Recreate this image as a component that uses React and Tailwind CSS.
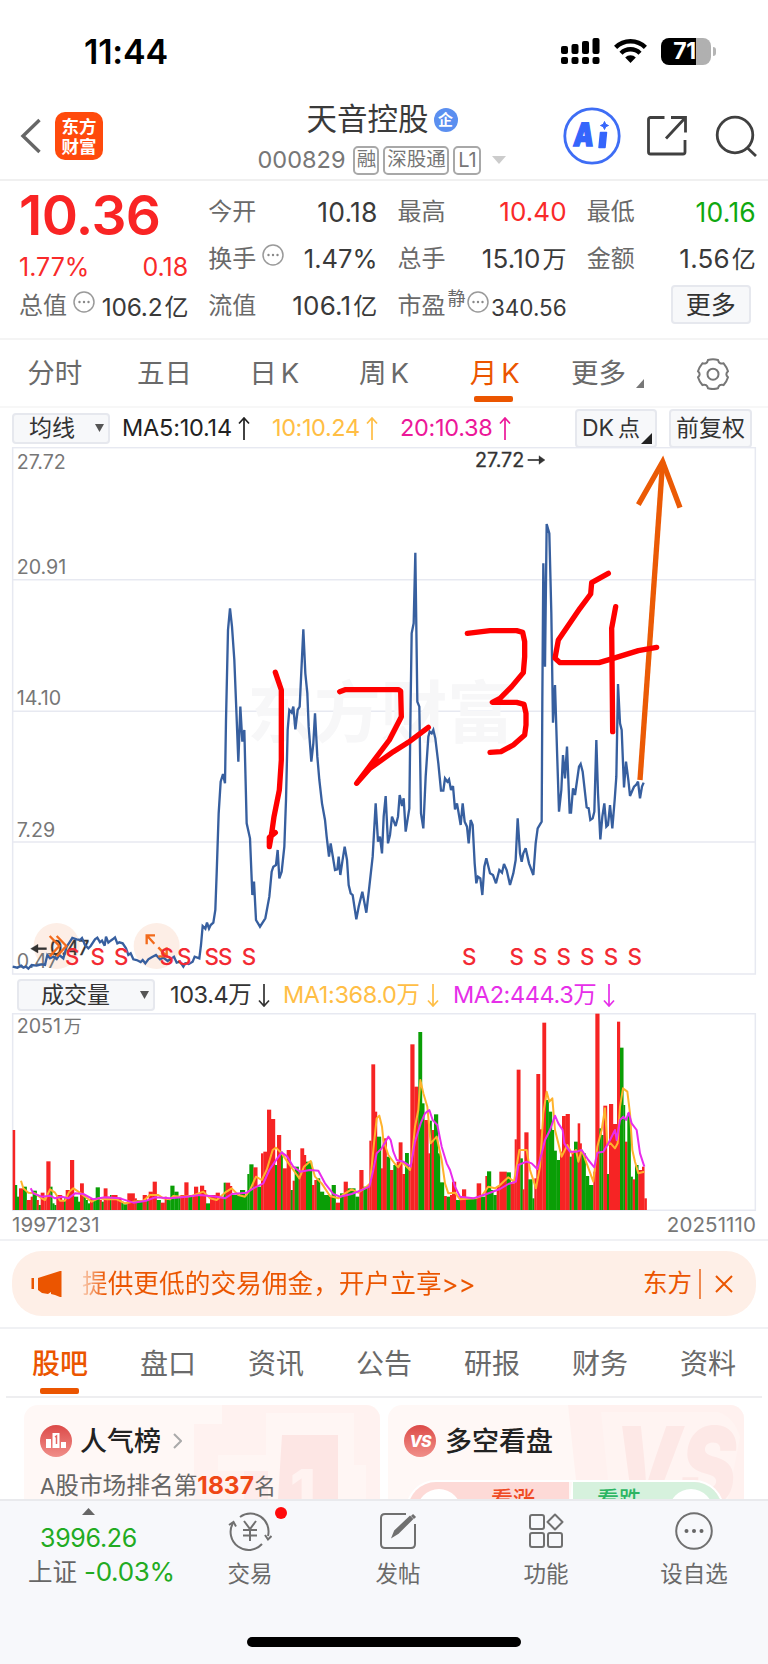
import { useState } from "react";

const PRICE =
  "38,800 52,803 64,797 70,803 78,800 85,806 95,795 110,797 125,793 135,795 142,765 150,775 160,770 170,777 178,765 190,775 200,740 210,725 217,714 230,718 240,720 246,714 255,735 265,745 272,738 285,718 292,713 300,727 306,722 314,737 318,710 325,728 332,722 338,718 345,712 352,730 358,727 368,730 378,745 385,765 392,760 400,778 410,780 422,786 428,780 436,790 445,778 455,772 468,765 480,778 490,773 503,783 515,775 522,770 530,788 540,785 550,800 556,790 566,792 578,785 584,770 598,775 603,735 608,678 616,686 621,668 627,686 632,675 640,668 646,630 650,520 656,340 662,245 669,222 675,250 678,60 684,-210 690,-275 696,-220 703,-120 709,30 715,185 721,20 727,125 733,90 740,370 750,415 757,585 762,545 768,660 780,680 796,655 808,590 815,515 820,500 828,495 833,450 838,535 845,515 853,440 858,300 863,90 868,30 875,38 880,20 886,88 893,30 899,20 910,-212 916,-80 922,-20 926,80 934,185 940,130 945,40 952,170 958,240 966,310 975,360 980,410 987,470 992,430 1005,510 1012,508 1016,470 1021,525 1027,485 1034,440 1041,480 1046,555 1052,580 1058,585 1069,658 1076,620 1087,575 1099,638 1108,560 1118,470 1127,310 1134,425 1140,410 1146,460 1151,350 1157,288 1164,430 1170,405 1176,350 1187,378 1194,350 1199,285 1206,318 1211,295 1217,395 1228,325 1232,0 1235,-200 1241,-230 1246,-442 1252,5 1258,20 1263,340 1270,385 1277,230 1285,110 1289,95 1295,100 1300,90 1306,115 1315,190 1323,272 1330,272 1335,235 1342,245 1347,238 1353,270 1359,258 1365,328 1371,310 1382,375 1388,310 1394,365 1401,380 1406,430 1412,360 1418,375 1424,490 1429,550 1434,530 1441,535 1447,585 1453,500 1459,475 1470,520 1479,525 1488,550 1498,510 1506,518 1512,492 1520,510 1530,555 1540,520 1547,480 1553,355 1560,460 1565,485 1570,460 1577,445 1587,490 1600,525 1607,430 1613,385 1625,365 1627,0 1630,-410 1635,-100 1640,-528 1648,-500 1654,-260 1659,68 1665,-45 1671,150 1677,335 1684,270 1689,165 1695,235 1701,140 1709,338 1713,338 1719,265 1725,285 1737,200 1742,192 1748,215 1760,322 1766,325 1771,360 1778,355 1783,335 1789,120 1794,280 1801,418 1807,350 1813,310 1819,380 1824,375 1830,315 1837,385 1844,300 1849,230 1854,-48 1860,70 1865,90 1872,262 1878,185 1885,240 1890,288 1902,260 1908,255 1914,245 1920,295 1926,260 1931,248";

const SIGNALS = [217, 293, 364, 500, 553, 635, 676, 747, 1408, 1550, 1621, 1691, 1762, 1833, 1904];

// x, top of the bar, colour; every run of bars reaches to the next x
const VOLUME =
  "38,480,r 45,645,g 51,680,g 57,655,r 69,650,g 80,690,r 92,680,r 98,662,g 110,690,r 116,705,g 122,668,r 133,685,r 139,574,r 151,650,g 157,700,g 163,705,g 169,675,r 186,690,r 192,685,g 197,660,r 210,570,r 222,680,g 234,695,g 240,640,r 251,675,g 257,690,g 263,700,g 270,685,r 280,690,g 287,652,g 299,690,r 305,695,g 311,655,r 322,680,r 330,675,g 334,675,r 352,683,r 364,695,g 370,703,g 382,670,r 404,685,r 410,690,g 428,675,r 440,690,g 446,665,r 458,635,r 470,690,g 482,698,r 494,680,r 500,690,g 511,647,g 523,665,g 535,680,g 541,675,r 553,637,r 565,675,g 577,680,r 582,650,r 594,672,g 600,647,r 612,660,r 618,700,g 630,675,r 647,668,r 659,680,r 671,638,g 677,638,r 690,648,r 696,675,g 720,660,g 735,675,g 742,612,g 748,583,g 760,592,r 772,650,g 783,550,r 790,545,r 801,419,r 813,447,r 825,585,g 831,495,r 843,545,g 848,595,r 860,540,r 872,660,g 878,632,r 884,590,g 896,605,r 901,535,r 912,555,r 918,575,g 936,645,r 943,630,r 950,625,g 960,665,g 972,675,g 990,680,r 995,645,g 1007,698,r 1020,670,g 1031,635,r 1043,655,g 1066,680,g 1078,600,r 1090,650,g 1102,645,r 1108,512,r 1114,283,r 1125,425,r 1131,500,g 1143,595,r 1148,505,r 1160,560,g 1170,600,r 1180,585,g 1190,575,r 1196,517,r 1207,612,r 1215,549,g 1226,600,r 1231,223,r 1243,350,r 1255,186,g 1266,400,g 1273,450,r 1285,550,r 1290,452,g 1295,480,r 1302,433,g 1314,550,g 1320,637,g 1332,678,r 1340,680,g 1350,675,r 1356,635,r 1368,690,g 1380,680,r 1386,658,r 1398,685,g 1430,640,r 1443,680,g 1456,618,r 1461,604,g 1473,660,g 1480,675,g 1490,650,r 1498,605,r 1520,607,g 1532,640,r 1544,508,r 1550,299,r 1561,565,g 1568,658,r 1573,487,r 1585,628,g 1597,685,g 1603,625,r 1609,312,r 1620,478,r 1627,158,r 1638,390,g 1646,425,g 1656,480,g 1662,542,g 1670,570,g 1680,545,r 1686,438,r 1697,432,r 1709,560,g 1715,545,r 1722,515,g 1733,460,r 1740,520,r 1745,550,g 1757,618,g 1767,645,g 1780,605,r 1786,131,r 1798,475,g 1804,495,g 1810,407,r 1821,612,g 1827,402,r 1839,462,r 1851,155,r 1860,233,g 1870,405,g 1875,515,r 1882,430,g 1892,620,g 1898,628,r 1905,585,g 1915,600,r 1926,590,r 1933,685,r 1940,720,r"
    .split(" ")
    .map((item) => item.split(","));

const VOL_MA1 =
  "63,632 70,655 85,668 105,670 125,685 135,690 150,658 165,668 180,692 195,692 208,665 220,655 235,665 255,680 275,695 295,685 320,688 350,688 375,700 400,695 430,692 450,675 475,675 490,685 510,688 520,678 545,680 575,678 610,665 630,685 650,690 675,668 695,655 715,675 735,680 750,660 768,620 785,630 800,600 818,540 828,533 845,550 860,572 880,600 898,625 912,590 932,573 945,620 965,640 990,678 1015,685 1035,670 1055,658 1075,668 1100,650 1110,640 1122,520 1130,445 1138,437 1146,470 1150,510 1165,555 1185,582 1195,592 1205,575 1230,600 1235,570 1245,470 1255,420 1261,330 1270,370 1282,410 1292,520 1310,500 1325,570 1335,640 1345,670 1365,668 1380,688 1425,685 1445,678 1465,650 1485,655 1500,645 1525,622 1542,635 1548,600 1558,540 1580,540 1590,600 1608,655 1620,590 1630,430 1640,365 1648,395 1657,385 1665,480 1685,560 1702,525 1715,550 1728,540 1735,575 1745,540 1760,580 1780,635 1792,530 1805,480 1815,415 1822,525 1832,520 1845,535 1853,520 1860,410 1869,355 1882,365 1890,430 1897,540 1905,575 1915,610 1933,605";

const VOL_MA2 =
  "92,655 100,670 125,680 150,677 165,685 185,680 205,685 225,670 250,672 280,688 315,682 360,685 400,698 440,692 465,682 510,685 560,680 600,675 650,680 675,685 695,672 740,668 760,655 790,640 808,600 825,575 845,547 862,560 880,590 900,605 930,600 955,602 975,640 1000,672 1020,680 1055,672 1090,658 1108,650 1120,600 1130,550 1145,535 1165,500 1172,510 1180,545 1190,570 1210,575 1232,590 1245,515 1262,460 1275,430 1288,420 1298,450 1312,465 1325,530 1340,580 1350,600 1365,650 1380,680 1420,685 1460,672 1500,657 1525,642 1548,635 1555,585 1580,575 1595,580 1612,597 1625,550 1635,510 1650,480 1665,437 1675,460 1688,480 1693,520 1710,545 1730,545 1745,540 1765,570 1783,592 1792,548 1810,545 1825,520 1845,480 1850,510 1860,450 1870,440 1878,450 1886,428 1895,460 1910,480 1920,550 1933,590";

const INFO_TABS = ["股吧", "盘口", "资讯", "公告", "研报", "财务", "资料"];

function Dots() {
  return (
    <svg width="22" height="22" viewBox="0 0 22 22" className="shrink-0" fill="none" stroke="#9a9a9a" strokeWidth="1.5">
      <circle cx="11" cy="11" r="10" />
      <g fill="#888" stroke="none">
        <circle cx="6.5" cy="11" r="1.2" />
        <circle cx="11" cy="11" r="1.2" />
        <circle cx="15.5" cy="11" r="1.2" />
      </g>
    </svg>
  );
}

function Arrow({ down = false, className = "" }) {
  return (
    <svg width="12" height="23" viewBox="0 0 12 23" className={className} fill="none" stroke="currentColor" strokeWidth="1.7">
      <path d={down ? "M6 0V22M1 16.5L6 22L11 16.5" : "M6 23V1M1 6.5L6 1L11 6.5"} />
    </svg>
  );
}

function Quote({ label, value, unit, color = "text-[#3a3a3a]", children, size = "text-[25.5px]" }) {
  return (
    <div className="flex h-[47px] items-center justify-between pt-[1px]">
      <span className="flex items-center text-[24px] text-[#6a6a6a]">
        {label}
        {children}
      </span>
      <span className={`${size} ${color}`}>
        {value}
        {unit && <span className="ml-[2px] text-[24px]">{unit}</span>}
      </span>
    </div>
  );
}

function StatusBar() {
  return (
    <div className="flex h-[96px] items-center pl-[84px] pr-[52px] pt-[6px]">
      <span className="pt-[1px] text-[34px] font-semibold tracking-[-0.2px] text-black">11:44</span>
      <svg width="40" height="28" viewBox="0 0 40 28" className="ml-auto">
        <rect x="1" y="9" width="7" height="8" rx="2" />
        <rect x="11.5" y="7" width="7" height="10" rx="2" />
        <rect x="22" y="4" width="7" height="13" rx="2" />
        <rect x="32.5" y="1" width="7" height="16" rx="2" />
        <rect x="1" y="20" width="7" height="7" rx="2" />
        <rect x="11.5" y="20" width="7" height="7" rx="2" />
        <rect x="22" y="20" width="7" height="7" rx="2" />
        <rect x="32.5" y="20" width="7" height="7" rx="2" />
      </svg>
      <svg width="33" height="26" viewBox="0 0 33 26" className="ml-[14px]" fill="none" stroke="#000" strokeWidth="4.4">
        <path d="M1.6 9.4a21 21 0 0 1 29.8 0" />
        <path d="M7 15.2a13.4 13.4 0 0 1 19 0" />
        <path d="M11.2 19.4a7.5 7.5 0 0 1 10.6 0L16.5 25Z" fill="#000" stroke="none" />
      </svg>
      <div className="ml-[14px] flex h-[27px] w-[50px] items-center justify-center overflow-hidden rounded-[8px] bg-linear-to-r from-black from-70% to-[#b0b0b0] to-70% pr-[3px] text-[23px] font-bold tracking-[-0.5px] text-white">
        71
      </div>
      <div className="ml-[2px] h-[9px] w-[3px] rounded-r-full bg-[#b5b5b5]" />
    </div>
  );
}

function Header() {
  return (
    <div className="flex h-[85px] items-center border-b-2 border-[#f0f0f0] pl-[20px] pr-[11px]">
      <div className="flex w-[219px] items-center pb-[4px]">
        <svg width="21" height="36" viewBox="0 0 21 36" fill="none" stroke="#666" strokeWidth="3.4">
          <path d="M19.5 2L3 18L19.5 34" />
        </svg>
        <div className="ml-[14px] flex h-[48px] w-[48px] flex-col items-center justify-center rounded-[10px] bg-[#ff4a0c] font-['Noto_Sans_CJK_SC',sans-serif] text-[17.5px] font-bold leading-[20px] text-white">
          <span>东方</span>
          <span>财富</span>
        </div>
      </div>
      <div className="flex w-[286px] flex-col items-center pt-[3px]">
        <div className="flex h-[42px] items-center gap-[5px]">
          <span className="text-[30.5px] text-[#3a3a3a]">天音控股</span>
          <span className="flex h-[24px] w-[24px] items-center justify-center rounded-full bg-[#5b8ff0] text-[15px] font-bold text-white">企</span>
        </div>
        <div className="flex h-[39px] items-center text-[23.5px] text-[#777]">
          <span className="mr-[8px]">000829</span>
          <span className="mr-[4px] flex h-[29px] w-[26px] items-center justify-center rounded-[5px] border-2 border-[#a8a8a8] text-[19.5px]">融</span>
          <span className="mr-[4px] flex h-[29px] w-[66px] items-center justify-center rounded-[5px] border-2 border-[#a8a8a8] text-[19.5px]">深股通</span>
          <span className="flex h-[29px] w-[28px] items-center justify-center rounded-[5px] border-2 border-[#a8a8a8] text-[20px]">L1</span>
          <svg width="14" height="8" viewBox="0 0 14 8" className="ml-[11px]">
            <path d="M0 0H14L7 8Z" fill="#ccc" />
          </svg>
        </div>
      </div>
      <div className="ml-auto flex items-center pb-[4px]">
        <svg width="58" height="58" viewBox="0 0 58 58" fill="none">
          <circle cx="29" cy="29" r="27.2" stroke="#3e6df5" strokeWidth="2.8" />
          <text x="14" y="39.500" fontSize="32" fontWeight="900" textLength="20" lengthAdjust="spacingAndGlyphs" transform="skewX(-6)" fill="#3565fb" stroke="#3565fb" strokeWidth="1.500">A</text>
          <path d="M37.500 25.500h6l-1.500 15h-6z" fill="#3565fb" stroke="#3565fb" strokeWidth="1.500" strokeLinejoin="round" />
          <path d="M41.500 14.500l1.200 2.800 2.800 1.200-2.800 1.200-1.200 2.800-1.200-2.800-2.800-1.200 2.800-1.200z" fill="#3565fb" stroke="#3565fb" />
        </svg>
        <svg width="42" height="42" viewBox="0 0 42 42" className="ml-[25px]" fill="none" stroke="#404040" strokeWidth="2.8">
          <path d="M18.500 2.500H4.500a2 2 0 0 0-2 2V37a2 2 0 0 0 2 2H37a2 2 0 0 0 2-2V25" />
          <path d="M25 2.500H39.500V17.500M39.500 2.500L20 23.500" />
        </svg>
        <svg width="42" height="42" viewBox="0 0 42 42" className="ml-[27px]" fill="none" stroke="#404040" strokeWidth="2.8">
          <circle cx="20" cy="20" r="17.800" />
          <path d="M32.500 33L41 41" />
        </svg>
      </div>
    </div>
  );
}

function QuotePanel() {
  return (
    <div className="grid h-[159px] grid-cols-4 gap-x-[20px] border-b-2 border-[#f4f4f4] pl-[19px] pr-[12px] pt-[7px]">
      <div>
        <div className="flex h-[54px] items-center text-[55px] font-semibold tracking-[-0.6px] text-[#f92424]">10.36</div>
        <div className="flex h-[50px] items-center justify-between text-[25px] text-[#f92a2a]">
          <span>1.77%</span>
          <span>0.18</span>
        </div>
        <div className="-mt-[10px]">
          <Quote label="总值" value="106.2" unit="亿" size="text-[24.5px] tracking-[-0.2px] pt-[2px]">
            <span className="ml-[6px] pb-[9px]"><Dots /></span>
          </Quote>
        </div>
      </div>
      <div>
        <Quote label="今开" value="10.18" size="text-[26.5px] tracking-[0.2px]" />
        <Quote label="换手" value="1.47%">
          <span className="ml-[6px] pb-[9px]"><Dots /></span>
        </Quote>
        <Quote label="流值" value="106.1" unit="亿" size="text-[26px] tracking-[0.2px]" />
      </div>
      <div>
        <Quote label="最高" value="10.40" color="text-[#f92a2a]" size="text-[26px] tracking-[0.1px]" />
        <Quote label="总手" value="15.10" unit="万" size="text-[26px] tracking-[0.2px]" />
        <Quote label="市盈" value="340.56" size="text-[22.5px] pt-[5px]">
          <span className="-mt-[14px] ml-[2px] text-[18px]">静</span>
          <span className="ml-[1px] pb-[9px]"><Dots /></span>
        </Quote>
      </div>
      <div>
        <Quote label="最低" value="10.16" color="text-[#10a810]" size="text-[26.5px] tracking-[0.2px]" />
        <Quote label="金额" value="1.56" unit="亿" size="text-[26px] tracking-[0.2px]" />
        <div className="ml-[84px] mt-[3px] flex h-[39px] w-[80px] items-center justify-center rounded-[4px] border-2 border-[#e6e8ee] bg-[#f7f8fa] pt-[1px] text-[25px] text-[#333]">更多</div>
      </div>
    </div>
  );
}

function PeriodTabs() {
  return (
    <div className="grid h-[68px] grid-cols-7 border-b-2 border-[#f7f7f7] pt-[1px] text-[27.500px] text-[#6a6a6a]">
      <div className="flex items-center justify-center">分时</div>
      <div className="flex items-center justify-center">五日</div>
      <div className="flex items-center justify-center gap-[4px]">日<span>K</span></div>
      <div className="flex items-center justify-center gap-[4px]">周<span>K</span></div>
      <div className="relative flex items-center justify-center gap-[4px] pl-[2px] text-[#eb5500]">
        月<span>K</span>
        <span className="absolute bottom-[4px] left-[35px] h-[6px] w-[39px] rounded-[2px] bg-[#eb5500]" />
      </div>
      <div className="flex items-center justify-center gap-[10px] pl-[8px]">
        更多
        <svg width="8" height="9" viewBox="0 0 8 9" className="mt-[20px]"><path d="M8 0V9H0Z" fill="#777" /></svg>
      </div>
      <div className="flex items-center justify-center">
        <svg width="34" height="32" viewBox="0 0 34 32" fill="none" stroke="#777" strokeWidth="2">
          <path d="M12 2q5-1.500 10 0c.6 3 2.700 4.200 5.600 3.300q3.100 3.700 4.400 8c-2.200 2-2.200 4 0 6q-1.300 4.300-4.400 7.700c-2.900-.9-5 .3-5.600 3.300q-5 1.500-10 0c-.6-3-2.700-4.200-5.600-3.300q-3.100-3.400-4.400-7.700c2.200-2 2.200-4 0-6q1.300-4.300 4.400-8c2.900.9 5-.3 5.600-3.300z" />
          <circle cx="17" cy="16.200" r="5.500" />
        </svg>
      </div>
    </div>
  );
}

function PriceChart() {
  return (
    <svg width="768" height="528" viewBox="0 -759 2304 1584" className="block">
      <g stroke="#e7e9f1" strokeWidth="4.500" fill="none">
        <rect x="38" y="-757" width="2228" height="1579" />
        <path d="M38 -361H2266M38 34H2266M38 426H2266" />
      </g>
      <text x="742" y="112" fontSize="200" fontWeight="700" fill="#f7f7f8">东方财富</text>
      <circle cx="170" cy="738" r="69" fill="#fdeee6" />
      <circle cx="470" cy="738" r="69" fill="#fdeee6" />
      <g fontSize="59" fill="#777">
        <text x="50" y="-692">27.72</text>
        <text x="50" y="-379">20.91</text>
        <text x="50" y="15">14.10</text>
        <text x="50" y="410">7.29</text>
        <text x="50" y="803">0.47</text>
      </g>
      <g fill="#333" stroke="#333" strokeWidth="1" fontSize="59">
        <text x="1425" y="-699">27.72</text>
        <path d="M1583 -720H1625" strokeWidth="5" />
        <path d="M1617 -733L1635 -720L1617 -707Z" />
        <text x="150" y="766" textLength="118">0.47</text>
        <path d="M105 746H140" strokeWidth="7" />
        <path d="M92 746L114 733V759Z" />
      </g>
      <polyline points={PRICE} fill="none" stroke="#375f9f" strokeWidth="7" strokeLinejoin="miter" strokeMiterlimit="3" />
      <g fill="none" stroke="#f26a1b" strokeWidth="7">
        <path d="M149 708L178 738L149 769M170 708L199 738L170 769" />
        <path d="M440 733V706H465M440 706L463 731" />
        <path d="M475 742L500 769M500 742V769H475" />
      </g>
      <g fontSize="67" fontWeight="500" fill="#f32a33" textAnchor="middle">
        {SIGNALS.map((x) => (
          <text key={x} x={x} y="796">S</text>
        ))}
      </g>
      <g fill="none" stroke="#eb5a05" strokeWidth="16">
        <path d="M1988 -715L1920 240" />
        <path d="M1915 -586L1988 -715L2040 -577" />
      </g>
      <g fill="none" stroke="#ff0000" strokeWidth="16" strokeLinecap="round" strokeLinejoin="round">
        <path d="M826 -83L844 -30V180L838 270L822 350L815 400L808 440V412L826 398" />
        <path d="M1019 -25L1035 -31H1195L1202 -27L1204 50L1168 120L1070 250L1110 205L1180 155L1225 127L1285 82" />
        <path d="M1402 -200L1470 -208H1550L1568 -203L1574 -175V-130L1570 -82L1535 -40L1500 -5L1477 7H1550L1572 13L1578 40V75L1574 105L1540 135L1503 155L1470 157" />
        <path d="M1825 -380L1775 -352L1772 -318L1740 -275L1675 -180L1665 -125L1680 -112H1797L1830 -122L1915 -148L1970 -158" />
        <path d="M1847 -280L1835 -215L1838 95" />
      </g>
    </svg>
  );
}

function VolumeChart() {
  return (
    <svg width="768" height="198" viewBox="0 129 2304 594" className="block">
      <path d="M38 131H2266V721H38Z" fill="none" stroke="#e7e9f1" strokeWidth="4.500" />
      <text x="50" y="189" fontSize="59" fill="#777">2051<tspan dx="8" fontSize="54">万</tspan></text>
      {VOLUME.slice(0, -1).map(([x, top, kind], i) => (
        <rect
          key={x}
          x={x}
          y={top}
          width={VOLUME[i + 1][0] - x + 0.6}
          height={720 - top}
          fill={kind === "r" ? "#f62424" : "#0a9e06"}
        />
      ))}
      <g fill="none" strokeWidth="6" strokeLinejoin="round">
        <polyline points={VOL_MA1} stroke="#ffb32c" />
        <polyline points={VOL_MA2} stroke="#e92cec" />
      </g>
    </svg>
  );
}

function Banner() {
  return (
    <div className="h-[90px] border-y-2 border-[#f0f1f4] px-[12px] pt-[10px]">
      <div className="flex h-[65px] items-center rounded-[30px] bg-[#feefe7] pl-[19px] pr-[23px] text-[25.700px] text-[#eb5500]">
        <svg width="32" height="28" viewBox="0 0 32 28" fill="#eb5500">
          <path d="M0.500 8h2.500v11H0.500zM7 8L29 1h1.500v26H29l-5-2-4-1v-2l-3 2-6-1-4-3z" />
        </svg>
        <span className="ml-[19px] bg-linear-to-r from-[#eb5500]/20 to-[#eb5500] to-6% bg-clip-text py-[4px] text-transparent">提供更低的交易佣金，开户立享&gt;&gt;</span>
        <span className="ml-auto text-[24.500px]">东方</span>
        <span className="ml-[7px] h-[30px] w-[2px] bg-[#f08a50]" />
        <svg width="18" height="18" viewBox="0 0 18 18" className="ml-[14px]" fill="none" stroke="#eb5500" strokeWidth="2">
          <path d="M1 1L17 17M17 1L1 17" />
        </svg>
      </div>
    </div>
  );
}

function InfoTabs() {
  const [active, setActive] = useState("股吧");
  return (
    <div className="mx-[6px] grid h-[69px] grid-cols-7 border-b-2 border-[#eeeef0]">
      {INFO_TABS.map((tab) => (
        <button
          key={tab}
          onClick={() => setActive(tab)}
          className={`relative flex items-center justify-center pt-[3px] text-[28px] ${tab === active ? "font-medium text-[#eb5500]" : "text-[#6a6a6a]"}`}
        >
          {tab}
          {tab === active && <span className="absolute bottom-[2px] left-[34px] h-[6px] w-[39px] rounded-[2px] bg-[#eb5500]" />}
        </button>
      ))}
    </div>
  );
}

function Cards() {
  return (
    <div className="flex h-[101px] gap-[8px] overflow-hidden px-[24px] pt-[7px]">
      <div className="relative h-[120px] w-[356px] overflow-hidden rounded-[14px] bg-[#fff8f6] pl-[16px] pt-[17px]">
        <svg width="186" height="94" viewBox="0 0 186 94" className="absolute right-0 top-0">
          <path d="M0 19H28V0H186V94H0Z" fill="#fff2f0" />
          <path d="M72 8H160V60H172V94H50V66H24V50H72Z" fill="#fff6f4" />
          <path d="M88 30H144V94H84Z" fill="#fde6e4" />
          <path d="M50 66H74V94H50Z" fill="#feeceb" />
          <text x="96" y="105" fontSize="56" fontWeight="900" fill="#fff3f1">1</text>
        </svg>
        <div className="relative flex h-[38px] items-center">
          <svg width="32" height="32" viewBox="0 0 32 32">
            <defs>
              <linearGradient id="badge" x1="0" y1="0" x2="0" y2="1">
                <stop offset="0" stopColor="#dc4a48" />
                <stop offset="1" stopColor="#f08e89" />
              </linearGradient>
            </defs>
            <circle cx="16" cy="16" r="16" fill="url(#badge)" />
            <g fill="#fff">
              <rect x="6" y="14" width="5" height="9" />
              <path d="M12.500 8H19.500V23H12.500Z" />
              <rect x="21" y="17" width="5" height="6" />
            </g>
            <path d="M15 12L16.500 11V19" stroke="#e46460" strokeWidth="1.500" fill="none" />
          </svg>
          <span className="ml-[8px] pt-[1px] text-[27px] font-medium text-[#222]">人气榜</span>
          <svg width="9" height="16" viewBox="0 0 9 16" className="ml-[12px]" fill="none" stroke="#aaa" strokeWidth="2"><path d="M1 1L8 8L1 15" /></svg>
        </div>
        <div className="relative mt-[7px] text-[23.700px] leading-[36px] text-[#666]">
          <span className="text-[22px]">A</span>股市场排名第<b className="text-[24.500px] font-bold text-[#ef4716]">1837</b><span className="text-[22px]">名</span>
        </div>
      </div>
      <div className="relative h-[120px] w-[356px] overflow-hidden rounded-[14px] bg-[#fff8f6] pl-[16px] pt-[17px]">
        <svg width="176" height="94" viewBox="0 0 176 94" className="absolute right-0 top-0">
          <path d="M0 0H176V94H10Z" fill="#fff1ef" />
          <path d="M33 7H150Q166 12 172 32L160 94H42Z" fill="#fff4f2" />
          <text x="46" y="100" fontSize="108" fontWeight="900" fontStyle="italic" textLength="122" lengthAdjust="spacingAndGlyphs" fill="#fde8e6">VS</text>
        </svg>
        <div className="relative flex h-[38px] items-center">
          <span className="flex h-[32px] w-[32px] items-center justify-center rounded-full bg-linear-to-b from-[#dc4a48] to-[#f08e89] text-[16px] font-extrabold italic tracking-[-1px] text-white">VS</span>
          <span className="ml-[9px] pt-[1px] text-[27px] font-medium text-[#222]">多空看盘</span>
        </div>
        <div className="relative ml-[2px] mt-[20px] flex h-[60px] w-[318px] overflow-hidden rounded-full border-2 border-white text-[22px] font-medium">
          <div className="relative w-[161px] shrink-0 bg-[#fddad7] pl-[83px] pt-[5px] leading-[24px] text-[#ef4a24]">
            看涨
            <span className="absolute left-[9px] top-[7px] h-[44px] w-[44px] rounded-full bg-white" />
          </div>
          <div className="w-[4px] shrink-0 -skew-x-6 bg-white" />
          <div className="relative flex-1 bg-[#d6f1dd] pl-[24px] pt-[5px] leading-[24px] text-[#2db563]">
            看跌
            <span className="absolute right-[9px] top-[7px] h-[44px] w-[44px] rounded-full bg-white" />
          </div>
        </div>
      </div>
    </div>
  );
}

function BottomItem({ label, children }) {
  return (
    <div className="flex w-[148px] flex-col items-center">
      <div className="relative flex h-[40px] items-center justify-center">{children}</div>
      <span className="mt-[6px] text-[22.500px] leading-[34px] text-[#6a6a6a]">{label}</span>
    </div>
  );
}

function BottomBar() {
  return (
    <div className="flex h-[165px] flex-col items-center border-t-2 border-[#e9eaed] bg-[#f7f8fb]">
      <div className="flex h-[136px] w-full pt-[10px]">
        <div className="flex w-[176px] shrink-0 flex-col pl-[28px]">
          <svg width="13" height="7" viewBox="0 0 13 7" className="-mt-[3px] ml-[54px]"><path d="M0 7L6.500 0L13 7Z" fill="#666" /></svg>
          <span className="ml-[12px] mt-[8px] text-[25px] leading-[30px] tracking-[-0.3px] text-[#22ab22]">3996.26</span>
          <span className="mt-[2px] whitespace-nowrap text-[24.500px] leading-[34px] text-[#666]">
            上证<span className="ml-[7px] text-[26px] tracking-[-0.300px] text-[#22ab22]">-0.03%</span>
          </span>
        </div>
        <BottomItem label="交易">
          <svg width="44" height="40" viewBox="0 0 44 40" fill="none" stroke="#707070" strokeWidth="2">
            <path d="M12 6A18 18 0 0 1 40 25M34 33A18 18 0 0 1 5 12" />
            <path d="M1 14L5.500 11L8 15.500M37 24L40 28.500L43.500 25" />
            <path d="M16 10L22 18L28 10M22 18V30M15 19H29M15 24.500H29" />
          </svg>
          <span className="absolute -right-[15px] -top-[4px] h-[12px] w-[12px] rounded-full bg-[#ff0a0a]" />
        </BottomItem>
        <BottomItem label="发帖">
          <svg width="38" height="40" viewBox="0 0 38 40" fill="none" stroke="#707070" strokeWidth="2">
            <path d="M27 3H6Q2 3 2 7V33Q2 37 6 37H32Q36 37 36 33V13" />
            <path d="M14 25L16 20L31 6L33 8L19 22Z" fill="#707070" />
            <path d="M33 4L36 7" strokeWidth="3" />
          </svg>
        </BottomItem>
        <BottomItem label="功能">
          <svg width="36" height="36" viewBox="0 0 36 36" fill="none" stroke="#707070" strokeWidth="2">
            <rect x="2" y="2" width="14" height="14" rx="2" />
            <rect x="2" y="20" width="14" height="14" rx="2" />
            <rect x="20" y="20" width="14" height="14" rx="2" />
            <path d="M27 1.500L34.500 9L27 16.500L19.500 9Z" strokeLinejoin="round" />
          </svg>
        </BottomItem>
        <BottomItem label="设自选">
          <svg width="38" height="38" viewBox="0 0 38 38" fill="none" stroke="#707070" strokeWidth="2">
            <circle cx="19" cy="19" r="17.800" />
            <g fill="#666" stroke="none">
              <circle cx="11.500" cy="19" r="2" />
              <circle cx="19" cy="19" r="2" />
              <circle cx="26.500" cy="19" r="2" />
            </g>
          </svg>
        </BottomItem>
      </div>
      <div className="h-[10px] w-[274px] rounded-full bg-black" />
    </div>
  );
}

export default function App() {
  return (
    <div className="flex h-[1664px] w-[768px] flex-col overflow-hidden bg-white font-['Inter','Noto_Sans_CJK_SC',sans-serif] leading-none whitespace-nowrap">
      <StatusBar />
      <Header />
      <QuotePanel />
      <PeriodTabs />

      <div className="flex h-[39px] items-center pl-[12px] pr-[16px] pt-[1px] text-[23px]">
        <div className="flex h-[31px] w-[98px] items-center justify-between rounded-[4px] border-2 border-[#e6e8ee] bg-[#f7f8fa] pl-[15px] pr-[4px] text-[#333]">
          均线
          <svg width="9" height="8" viewBox="0 0 9 8"><path d="M0 0H9L4.500 8Z" fill="#555" /></svg>
        </div>
        <div className="ml-[12px] flex w-[150px] items-center text-[#222]">
          <span className="text-[23.500px] tracking-[-0.200px]">MA5:10.14</span>
          <Arrow className="ml-[6px]" />
        </div>
        <div className="flex w-[128px] items-center text-[#ffbe45]">
          <span className="text-[23.500px] tracking-[-0.400px]">10:10.24</span>
          <Arrow className="ml-[6px]" />
        </div>
        <div className="flex items-center text-[#ec1899]">
          <span className="text-[23.500px] tracking-[-0.300px]">20:10.38</span>
          <Arrow className="ml-[6px]" />
        </div>
        <div className="ml-auto flex h-[39px] w-[82px] items-center justify-center rounded-[4px] border-2 border-[#e6e8ee] bg-[#f7f8fa] text-[#333]">
          DK<span className="ml-[4px] text-[22px]">点</span>
          <svg width="11" height="11" viewBox="0 0 11 11" className="-mr-[2px] ml-[1px] mt-[20px]"><path d="M11 0V11H0Z" fill="#222" /></svg>
        </div>
        <div className="ml-[12px] flex h-[39px] w-[83px] items-center justify-center rounded-[4px] border-2 border-[#e6e8ee] bg-[#f7f8fa] text-[#333]">前复权</div>
      </div>

      <PriceChart />

      <div className="flex h-[38px] items-center pl-[17px] pt-[2px] text-[23.500px]">
        <div className="flex h-[32px] w-[138px] items-center justify-between rounded-[4px] border-2 border-[#e6e8ee] bg-[#f7f8fa] pl-[22px] pr-[4px] text-[23px] text-[#333]">
          成交量
          <svg width="9" height="8" viewBox="0 0 9 8"><path d="M0 0H9L4.500 8Z" fill="#555" /></svg>
        </div>
        <div className="ml-[15px] flex w-[113px] items-center text-[#333]">
          <span className="tracking-[-0.400px]">103.4万</span>
          <Arrow down className="ml-[7px]" />
        </div>
        <div className="flex w-[170px] items-center text-[#ffbe45]">
          <span className="tracking-[-0.400px]">MA1:368.0万</span>
          <Arrow down className="ml-[7px]" />
        </div>
        <div className="flex items-center text-[#e62fe9]">
          <span className="tracking-[-0.400px]">MA2:444.3万</span>
          <Arrow down className="ml-[7px]" />
        </div>
      </div>

      <VolumeChart />
      <div className="flex h-[28px] items-center justify-between px-[12px] text-[20.500px] tracking-[0.100px] text-[#777]">
        <span>19971231</span>
        <span>20251110</span>
      </div>

      <Banner />
      <InfoTabs />
      <Cards />
      <BottomBar />
    </div>
  );
}
